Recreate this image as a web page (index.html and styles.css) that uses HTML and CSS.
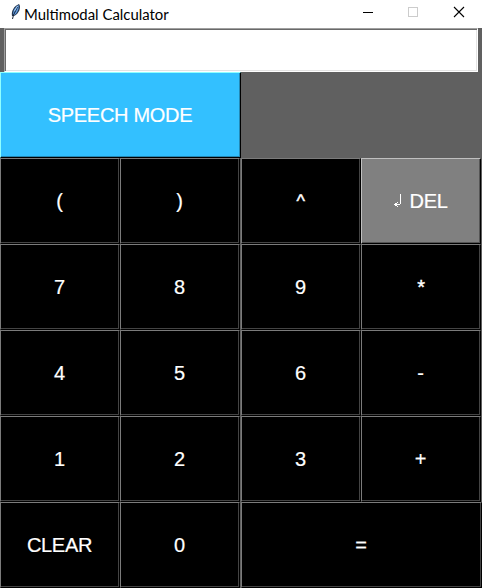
FILE: index.html
```html
<!DOCTYPE html>
<html lang="en">
<head>
<meta charset="utf-8">
<title>Multimodal Calculator</title>
<link rel="stylesheet" href="styles.css">
</head>
<body>
<header class="titlebar">
  <svg class="feather" width="12" height="18" viewBox="0 0 12 18">
    <path d="M2 13C1 8 4 3 9 1C11.500 4 9 11 4 13Z" fill="#24364f"/>
    <path d="M3 11.500C3 7 5.500 4 8.500 2C9.500 6 7 10 4.500 12Z" fill="#5f9be0"/>
    <path d="M7.500 4L3.500 12L2.500 16" fill="none" stroke="#182438" stroke-width="1"/>
    <path d="M7.500 3L4.500 8" fill="none" stroke="#b8dcff" stroke-width=".8"/>
  </svg>
  <h1 class="title">Multimodal Calculator</h1>
  <svg class="controls" width="122" height="24" viewBox="0 0 122 24" fill="none" shape-rendering="crispEdges">
    <path d="M3 12.500H13" stroke="#000"/>
    <rect x="48.500" y="7.500" width="9" height="9" stroke="#ccc"/>
    <path d="M94 7L104 17M104 7L94 17" stroke="#000" stroke-width="1.100" shape-rendering="auto"/>
  </svg>
</header>
<main class="calculator">
  <input class="display" type="text" aria-label="Expression">
  <div class="keys">
    <button class="key speech">SPEECH MODE</button>
    <button class="key c1">(</button>
    <button class="key">)</button>
    <button class="key c3 caret">^</button>
    <button class="key del"><svg width="7" height="16" viewBox="0 0 7 16" fill="#fff" shape-rendering="crispEdges"><path d="M6 1H7V11H6ZM0 11H6V12H0ZM1 10H3V13H1ZM3 9H4V10H3ZM3 13H4V14H3Z"/></svg>DEL</button>
    <button class="key c1">7</button>
    <button class="key">8</button>
    <button class="key c3">9</button>
    <button class="key star">*</button>
    <button class="key c1">4</button>
    <button class="key">5</button>
    <button class="key c3">6</button>
    <button class="key">-</button>
    <button class="key c1">1</button>
    <button class="key">2</button>
    <button class="key c3">3</button>
    <button class="key">+</button>
    <button class="key c1">CLEAR</button>
    <button class="key">0</button>
    <button class="key equals">=</button>
  </div>
</main>
</body>
</html>
```
FILE: styles.css
```css
* { box-sizing: border-box; }
body {
  margin: 0;
  width: 482px;
  height: 588px;
  overflow: hidden;
  background: #606060;
}
.titlebar {
  display: flex;
  align-items: flex-start;
  height: 28px;
  padding-left: 10px;
  background: #fff;
}
.feather { margin-top: 3px; }
.title {
  flex: 1;
  margin: 0 0 0 2px;
  font: 400 14.9px/28px Lato, sans-serif;
  color: #000;
  white-space: nowrap;
}
.controls { flex: none; }
.display {
  display: block;
  width: 474px;
  height: 44px;
  margin-left: 4px;
  padding: 0 6px;
  border: 1px solid;
  border-color: #a0a0a0 #fff #fff #a0a0a0;
  border-radius: 0;
  outline: 0;
  background: #fff;
  box-shadow: inset 1px 1px #696969, inset -1px -1px #e3e3e3;
  font: 20px "Liberation Sans", sans-serif;
}
.keys {
  display: grid;
  grid-template-columns: 120px 120px 1px 120px 120px 1px;
  grid-auto-rows: 86px;
}
.key {
  display: flex;
  align-items: center;
  justify-content: center;
  padding: 0 1px 0 0;
  border: 1px solid;
  border-color: #7b7b7b #000 #000 #7b7b7b;
  border-radius: 0;
  background: #000;
  box-shadow: inset -1px -1px #444;
  color: #fff;
  font: 20px/24px "Liberation Sans", Arial, sans-serif;
  letter-spacing: -0.3px;
  -webkit-text-stroke: 0.2px #fff;
}
.c1 { grid-column: 1; }
.c3 { grid-column: 4; }
.speech {
  grid-column: 1 / 4;
  border-color: #8fffff #000 #000 #8fffff;
  background: #33c0ff;
  box-shadow: inset -1px -1px #2388b5;
}
.caret {
  font-size: 18px;
  -webkit-text-stroke-width: 0.5px;
}
.star {
  padding-left: 1px;
  -webkit-text-stroke-width: 0.4px;
}
.del {
  gap: 8px;
  padding-left: 1px;
  border-color: #c0c0c0 #000 #000 #c0c0c0;
  background: #808080;
  box-shadow: inset -1px -1px #555;
}
.equals { grid-column: 4 / 7; }
```
